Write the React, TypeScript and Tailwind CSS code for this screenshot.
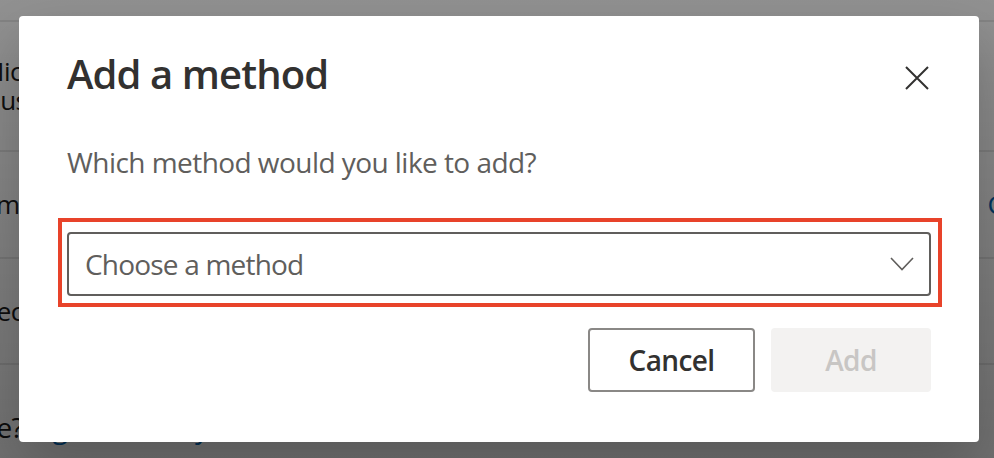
import React from 'react';

const font = { fontFamily: '"Open Sans", "Noto Sans", Arial, sans-serif' };

const BackgroundPage: React.FC = () => {
  return (
    <div className="h-[458px] w-[994px] overflow-hidden bg-white text-[26px] tracking-[-0.5px] text-[#1b1b1b]" style={font}>
      <div className="h-[20px]" />
      <div className="flex h-[130px] flex-col justify-center border-t-2 border-[#e8e8e8]">
        <div className="-ml-[19px] leading-[29px]">Microsoft Authenticator</div>
        <div className="-ml-[15px] leading-[29px]">Push multi-factor authentication (MFA)</div>
      </div>
      <div className="flex h-[107px] items-center justify-between border-t-2 border-[#e8e8e8]">
        <div className="-ml-[18px]">Email</div>
        <div className="-mr-[82px] text-[#0067b8]">Change</div>
      </div>
      <div className="flex h-[106px] items-center border-t-2 border-[#e8e8e8]">
        <div className="-ml-[17px]">Security questions</div>
      </div>
      <div className="flex h-[95px] items-center gap-2 border-t-2 border-[#e8e8e8] pt-[30px]">
        <div className="-ml-[128px] text-[28px]">Lost device?</div>
        <div className="text-[28px] text-[#0067b8]">Sign out everywhere</div>
      </div>
    </div>
  );
};

const App: React.FC = () => {
  return (
    <div className="relative h-[458px] w-[994px] overflow-hidden">
      <BackgroundPage />

      {/* dimmed overlay */}
      <div className="absolute inset-0 bg-gradient-to-b from-black/[0.43] to-black/[0.56]" />

      {/* dialog */}
      <div
        className="absolute left-[19px] top-[16px] h-[426px] w-[960px] rounded-[4px] bg-white px-12 pt-[30px] shadow-[0_25px_60px_rgba(0,0,0,0.22)]"
        style={font}
      >
        <button className="absolute right-[50px] top-[50px] flex h-6 w-6 items-center justify-center text-[#323130]">
          <svg width="24" height="24" viewBox="0 0 24 24" fill="none" stroke="currentColor" strokeWidth="2">
            <path d="M1 1 L23 23 M23 1 L1 23" />
          </svg>
        </button>

        <h2 className="text-[40px] font-semibold leading-[56px] tracking-[-0.9px] text-[#323130]">Add a method</h2>

        <p className="mt-[40px] text-[28px] leading-[40px] tracking-[-0.55px] text-[#605e5c]">
          Which method would you like to add?
        </p>

        <div className="relative mt-[50px]">
          <div className="pointer-events-none absolute -bottom-[11px] -left-[9px] -right-[11px] -top-[14px] border-4 border-[#e8432a]" />
          <div className="flex h-[64px] items-center justify-between rounded-[4px] border-2 border-[#605e5c] pl-[16px] pr-[15px]">
            <span className="text-[28px] tracking-[-0.8px] text-[#605e5c]">Choose a method</span>
            <svg width="24" height="14" viewBox="0 0 24 14" fill="none" stroke="#605e5c" strokeWidth="1.6">
              <path d="M1 1 L12 12.5 L23 1" />
            </svg>
          </div>
        </div>

        <div className="mt-[32px] flex justify-end gap-4">
          <button className="h-[64px] w-[167px] rounded-[4px] border-2 border-[#8a8886] text-[28px] font-semibold tracking-[-0.6px] text-[#323130]">
            Cancel
          </button>
          <button className="h-[64px] w-[160px] rounded-[4px] bg-[#f3f2f1] text-[28px] font-semibold tracking-[-0.6px] text-[#c8c6c4]">
            Add
          </button>
        </div>
      </div>
    </div>
  );
};

export default App;
